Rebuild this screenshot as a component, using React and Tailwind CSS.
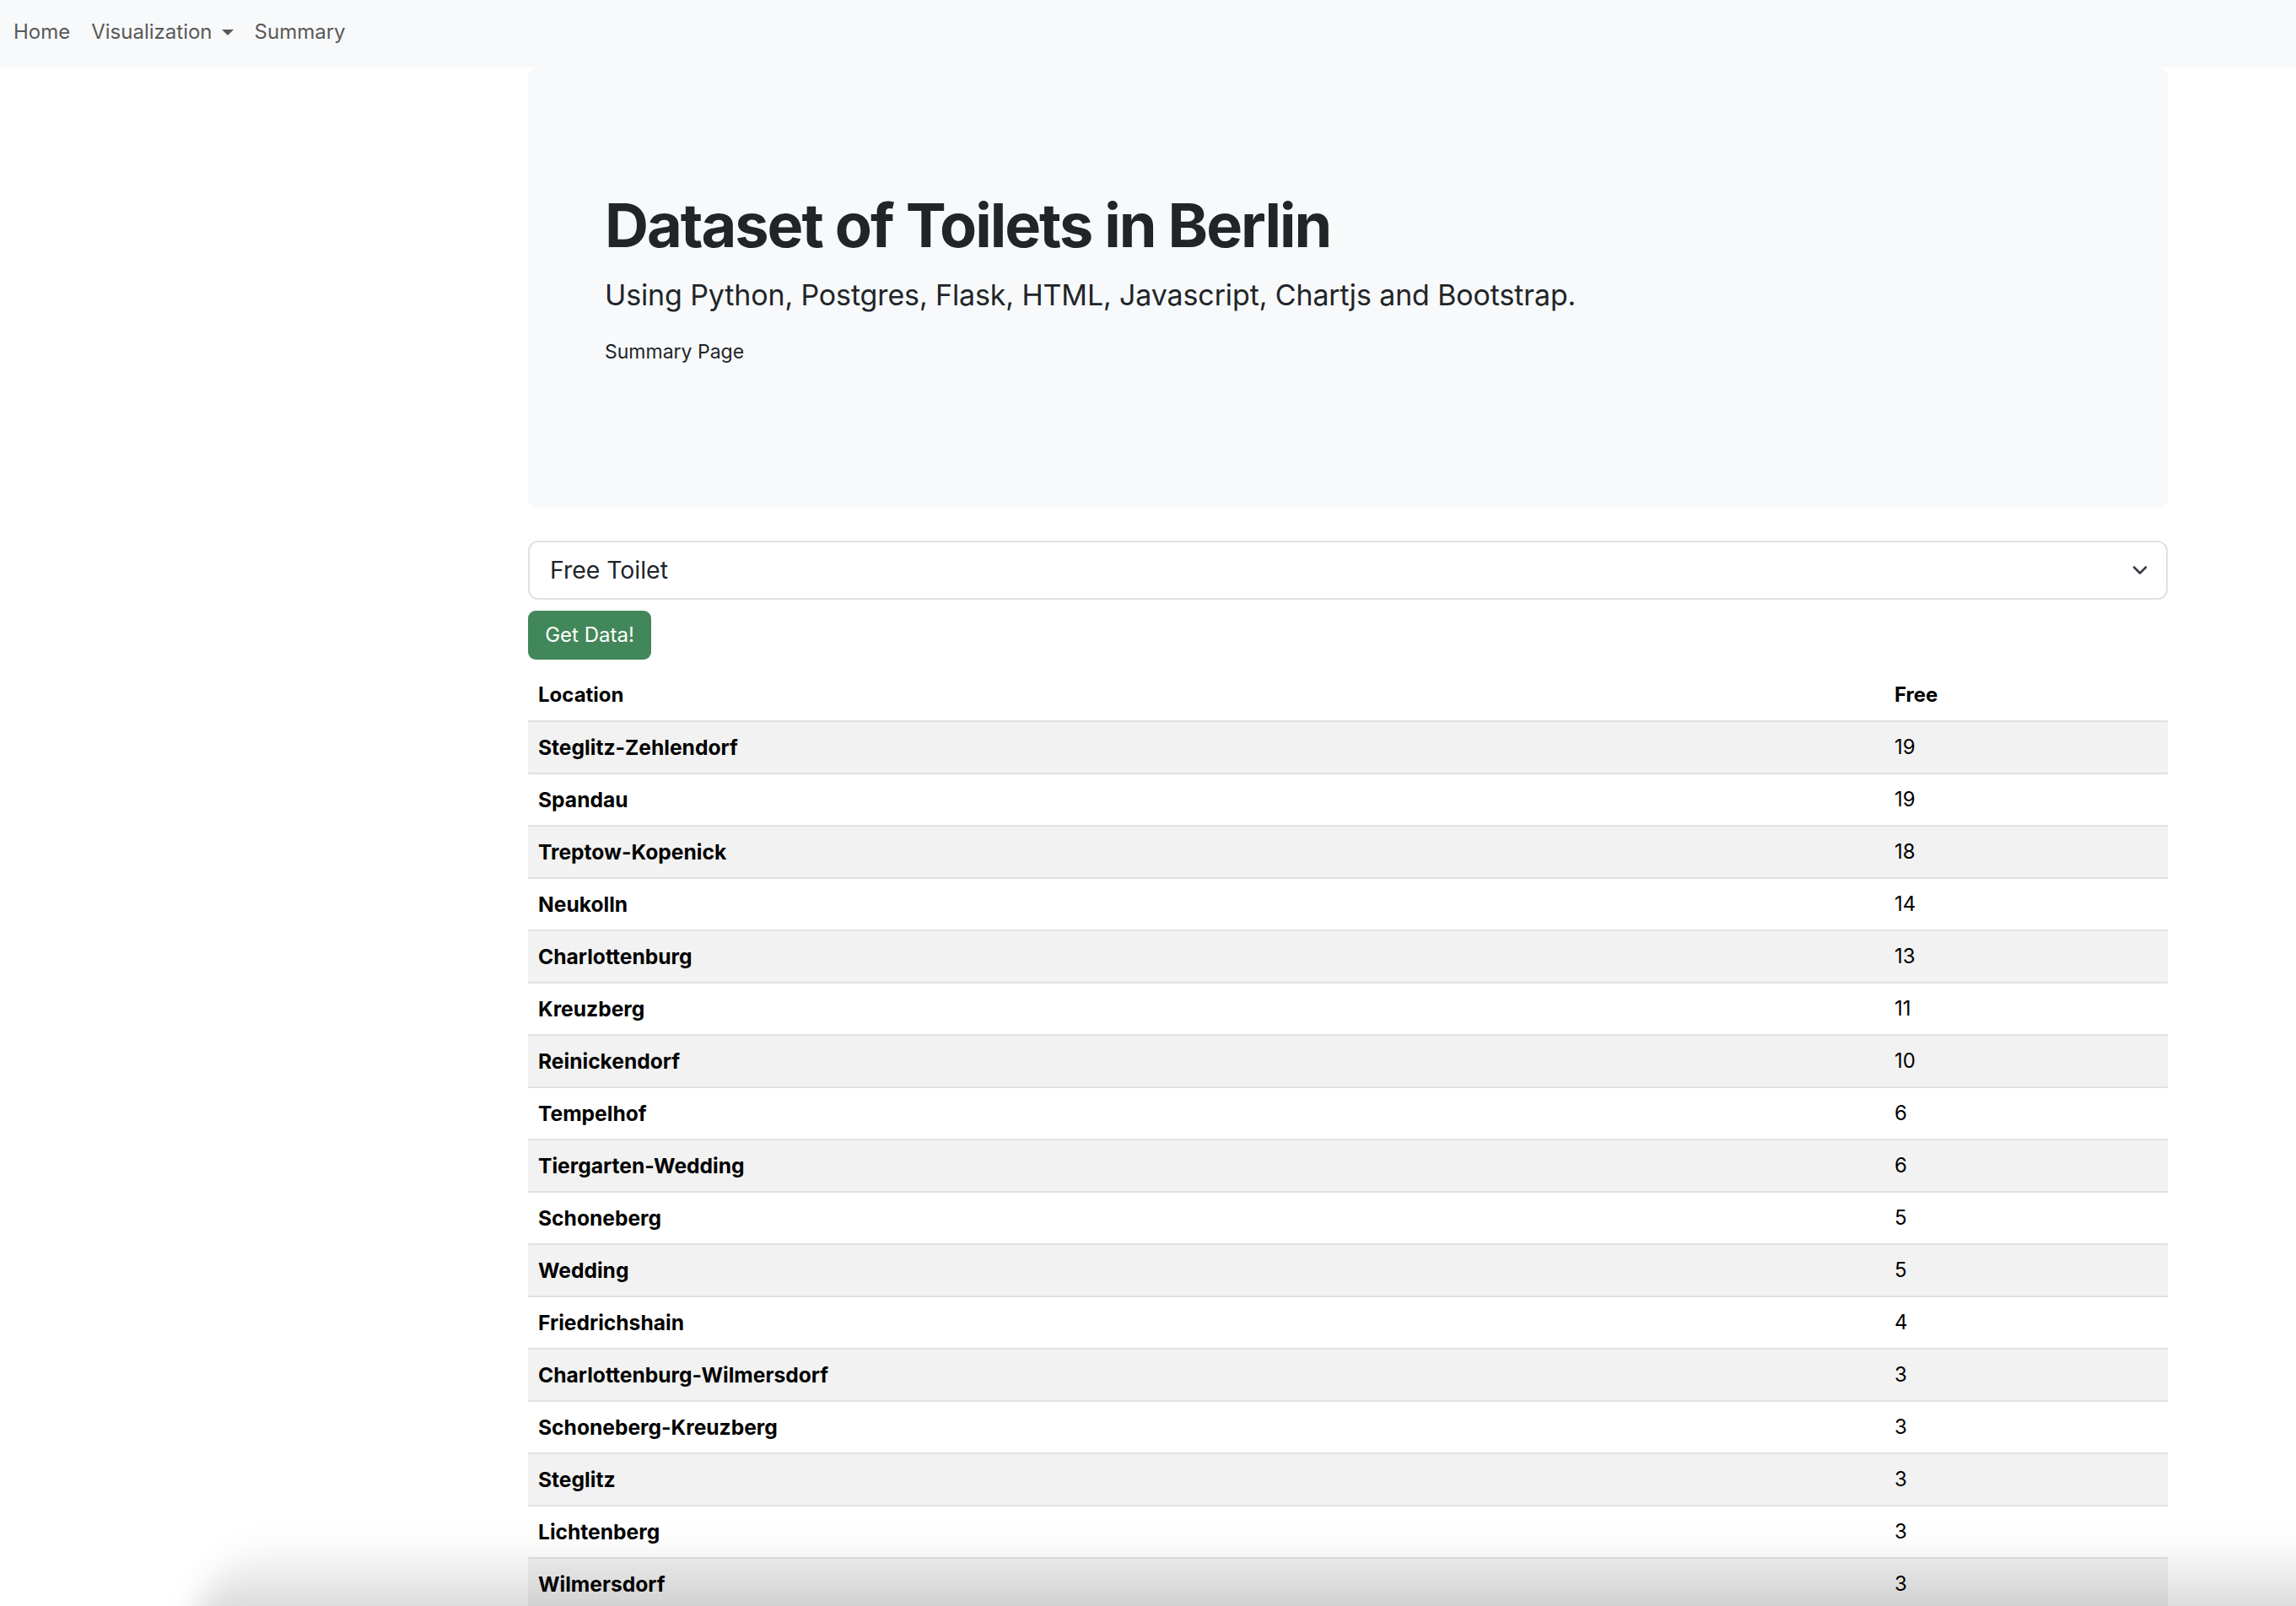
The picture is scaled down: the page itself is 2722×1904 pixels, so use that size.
const ROWS = [
  ['Steglitz-Zehlendorf', 19],
  ['Spandau', 19],
  ['Treptow-Kopenick', 18],
  ['Neukolln', 14],
  ['Charlottenburg', 13],
  ['Kreuzberg', 11],
  ['Reinickendorf', 10],
  ['Tempelhof', 6],
  ['Tiergarten-Wedding', 6],
  ['Schoneberg', 5],
  ['Wedding', 5],
  ['Friedrichshain', 4],
  ['Charlottenburg-Wilmersdorf', 3],
  ['Schoneberg-Kreuzberg', 3],
  ['Steglitz', 3],
  ['Lichtenberg', 3],
  ['Wilmersdorf', 3],
];

export default function App() {
  return (
    <div className="min-h-screen bg-white text-[#212529] font-['Inter','Liberation_Sans',sans-serif]">
      {/* Navbar */}
      <nav className="h-[80px] bg-[#f8f9fa] flex items-start pt-[20px] pl-[16px] gap-[25px] text-[24px] leading-[36px] text-[#595959]">
        <a>Home</a>
        <a className="flex items-center">
          Visualization
          <span className="ml-[11px] mt-[1px] w-0 h-0 border-t-[7px] border-t-[#595959] border-x-[7px] border-x-transparent" />
        </a>
        <a>Summary</a>
      </nav>

      <main className="ml-[626px] w-[1944px]">
        {/* Jumbotron */}
        <div className="h-[523px] bg-[#f8f9fa] rounded-[12px] pt-[144px] pl-[91px]">
          <h1 className="text-[72px] leading-[1.2] font-bold tracking-[-0.028em]">Dataset of Toilets in Berlin</h1>
          <p className="mt-[14px] text-[34px] leading-[1.5] tracking-[-0.004em]">
            Using Python, Postgres, Flask, HTML, Javascript, Chartjs and Bootstrap.
          </p>
          <p className="mt-[25px] text-[23px] leading-[1.5]">Summary Page</p>
        </div>

        {/* Select */}
        <div className="mt-[38px] h-[70px] border-2 border-[#dee2e6] rounded-[12px] flex items-center justify-between pl-[24px] pr-[22px]">
          <span className="text-[28.4px] pt-[1px]">Free Toilet</span>
          <svg width="18" height="12" viewBox="0 0 18 12" fill="none" stroke="#343a40" strokeWidth="2.5" strokeLinecap="round" strokeLinejoin="round">
            <path d="M2 2.5l7 7 7-7" />
          </svg>
        </div>

        <button className="mt-[13px] h-[58px] w-[146px] rounded-[9px] bg-[#42875a] text-white text-[24px]">
          Get Data!
        </button>

        {/* Table */}
        <div className="mt-[12px] text-[24px] text-black">
          <div className="grid grid-cols-[1608px_1fr] h-[62px] items-center border-b-2 border-[#dee2e6] font-bold">
            <div className="pl-[12px]">Location</div>
            <div className="pl-[12px]">Free</div>
          </div>
          {ROWS.map(([loc, n], i) => (
            <div
              key={loc}
              className={`grid grid-cols-[1608px_1fr] h-[62px] items-center border-b-2 border-[#dee2e6] ${
                i % 2 === 0 ? 'bg-[#f2f2f2]' : 'bg-white'
              }`}
            >
              <div className="pl-[12px] font-bold text-[24.6px]">{loc}</div>
              <div className="pl-[12px]">{n}</div>
            </div>
          ))}
        </div>
      </main>

      {/* bottom window shadow */}
      <div className="pointer-events-none fixed bottom-[-40px] left-[230px] right-[-60px] h-[120px] rounded-tl-[400px] bg-linear-to-b from-transparent to-black/20 blur-[18px]" />
    </div>
  );
}
